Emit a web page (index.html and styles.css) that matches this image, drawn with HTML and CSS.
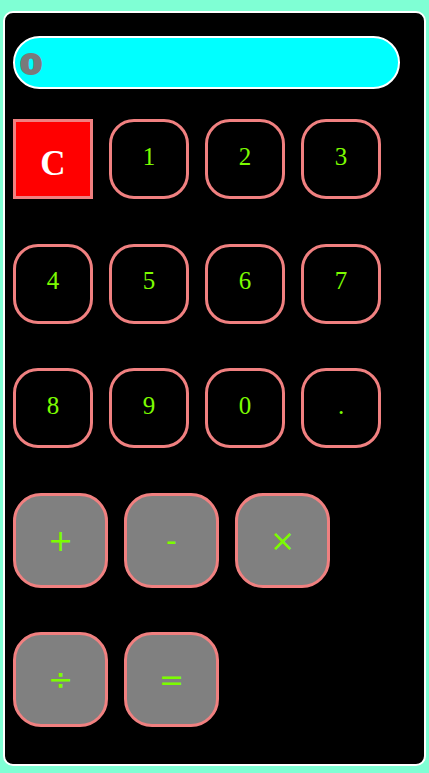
FILE: index.html
```html
<!DOCTYPE html>
<html>
<head>
<meta charset="utf-8">
<link rel="stylesheet" href="styles.css">
</head>
<body>
<div class="calc">
  <div class="display"><span class="value">0</span></div>
  <div class="rows">
    <div class="row">
      <button class="btn clear">C</button>
      <button class="btn num">1</button>
      <button class="btn num">2</button>
      <button class="btn num">3</button>
    </div>
    <div class="row">
      <button class="btn num">4</button>
      <button class="btn num">5</button>
      <button class="btn num">6</button>
      <button class="btn num">7</button>
    </div>
    <div class="row">
      <button class="btn num">8</button>
      <button class="btn num">9</button>
      <button class="btn num">0</button>
      <button class="btn num">.</button>
    </div>
    <div class="row">
      <button class="btn op">+</button>
      <button class="btn op">-</button>
      <button class="btn op">×</button>
    </div>
    <div class="row">
      <button class="btn op">÷</button>
      <button class="btn op">=</button>
    </div>
  </div>
</div>
</body>
</html>
```
FILE: styles.css
```css
html, body {
  margin: 0;
  padding: 0;
  background: #7fffd4;
}
body {
  padding: 11px 3px 7px 3px;
}
.calc {
  width: 419px;
  height: 751px;
  box-sizing: content-box;
  background: #000;
  border: 2px solid #fff;
  border-radius: 10px;
  padding: 0;
  display: flex;
  flex-direction: column;
}
.display {
  margin: 23px 0 0 8px;
  width: 381px;
  height: 49px;
  border: 2px solid #fff;
  border-radius: 27px;
  background: #00ffff;
  padding-left: 2px;
  box-sizing: content-box;
  display: flex;
  align-items: center;
}
.value {
  display: inline-block;
  color: #7a7a7a;
  font-family: "DejaVu Sans", sans-serif;
  font-weight: bold;
  font-size: 27px;
  line-height: 1;
  -webkit-text-stroke: 2px #7a7a7a;
  transform: scaleX(1.18);
  transform-origin: left center;
  margin-left: 3px;
  padding-top: 3px;
}
.rows {
  margin: 30px 0 0 8px;
  display: flex;
  flex-direction: column;
  gap: 44.5px;
}
.row {
  display: flex;
  gap: 16px;
}
.btn {
  margin: 0;
  padding: 0;
  border: 3px solid #f08080;
  box-sizing: border-box;
  display: flex;
  align-items: center;
  justify-content: center;
}
.num {
  width: 80px;
  height: 80px;
  border-radius: 25px;
  background: #000;
  color: #7cfc00;
  font-family: "Liberation Serif", serif;
  font-size: 25px;
  padding-bottom: 5px;
}
.clear {
  width: 80px;
  height: 80px;
  border-radius: 0;
  background: #ff0000;
  color: #fff;
  font-family: "Liberation Serif", serif;
  font-weight: bold;
  font-size: 35px;
  padding-top: 9px;
}
.op {
  width: 95px;
  height: 95px;
  border-radius: 28px;
  background: #808080;
  color: #7cfc00;
  font-family: "DejaVu Sans", sans-serif;
  font-size: 30px;
}
```
